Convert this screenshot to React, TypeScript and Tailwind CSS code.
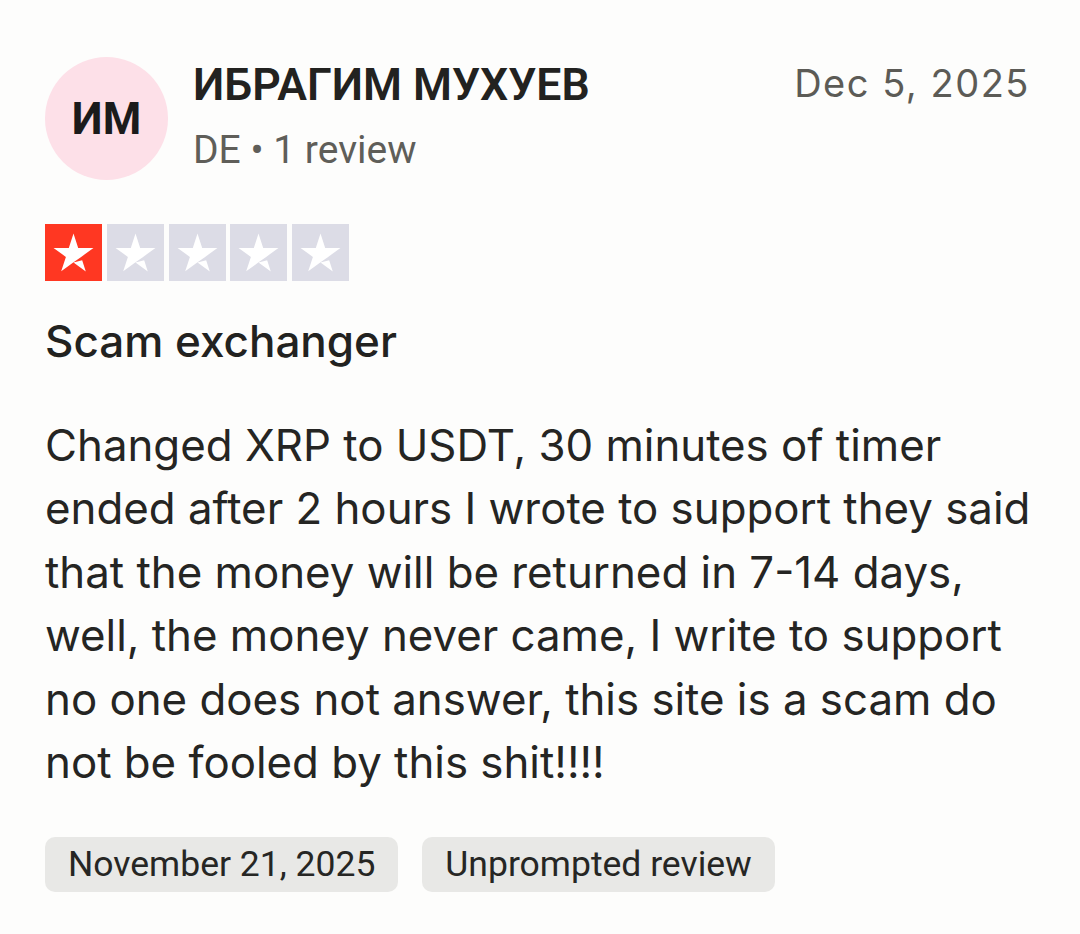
import React from "react";

const Star: React.FC<{ filled?: boolean }> = ({ filled }) => (
  <svg viewBox="0 0 96 96" className="h-[57px] w-[57px] shrink-0">
    <rect width="96" height="96" fill={filled ? "#ff3722" : "#dcdce6"} />
    <path
      fill="#ffffff"
      d="M48 64.7L62.6 61l6.1 18.8L48 64.7zm33.6-24.3H55.9L48 16.2l-7.9 24.2H14.4l20.8 15-7.9 24.2 20.8-15 12.8-9.2 20.7-15z"
    />
  </svg>
);

export default function App() {
  return (
    <div className="min-h-[934px] w-[1080px] bg-[#fdfdfc] pl-[45px] pr-[50px] pt-[57px] text-[#1e1e1c]">
      {/* Header */}
      <div className="flex items-start">
        <div className="flex h-[123px] w-[123px] shrink-0 items-center justify-center rounded-full bg-[#fde0e8] font-['Roboto',sans-serif] text-[44px] font-bold text-[#1b1b1b]">
          ИМ
        </div>
        <div className="ml-[25px] flex flex-col pt-[2px] font-['Roboto',sans-serif]">
          <div className="text-[44.5px] font-semibold leading-[52px] text-[#222220]">ИБРАГИМ МУХУЕВ</div>
          <div className="mt-[16px] text-[39px] leading-[46px] text-[#5f5e59]">DE • 1 review</div>
        </div>
        <div className="ml-auto pt-[3px] font-['Inter',sans-serif] text-[38px] leading-[46px] tracking-[0.04em] text-[#5c5b56]">
          Dec 5, 2025
        </div>
      </div>

      {/* Rating */}
      <div className="mt-[44px] flex gap-[4.75px]">
        <Star filled />
        <Star />
        <Star />
        <Star />
        <Star />
      </div>

      {/* Title */}
      <h2 className="mt-[34px] font-['Inter',sans-serif] text-[44px] font-medium leading-[52px] text-[#222220]">
        Scam exchanger
      </h2>

      {/* Body */}
      <p className="mt-[47px] whitespace-nowrap font-['Inter',sans-serif] text-[43.8px] leading-[63.4px] text-[#252523]">
        Changed XRP to USDT, 30 minutes of timer
        <br />
        ended after 2 hours I wrote to support they said
        <br />
        that the money will be returned in 7-14 days,
        <br />
        well, the money never came, I write to support
        <br />
        no one does not answer, this site is a scam do
        <br />
        not be fooled by this shit!!!!
      </p>

      {/* Tags */}
      <div className="mt-[43px] flex gap-[24px] font-['Roboto',sans-serif] text-[35.5px] text-[#262624]">
        <span className="flex h-[55px] items-center rounded-[10px] bg-[#e8e8e6] px-[23px]">November 21, 2025</span>
        <span className="flex h-[55px] items-center rounded-[10px] bg-[#e8e8e6] px-[23px]">Unprompted review</span>
      </div>
    </div>
  );
}
